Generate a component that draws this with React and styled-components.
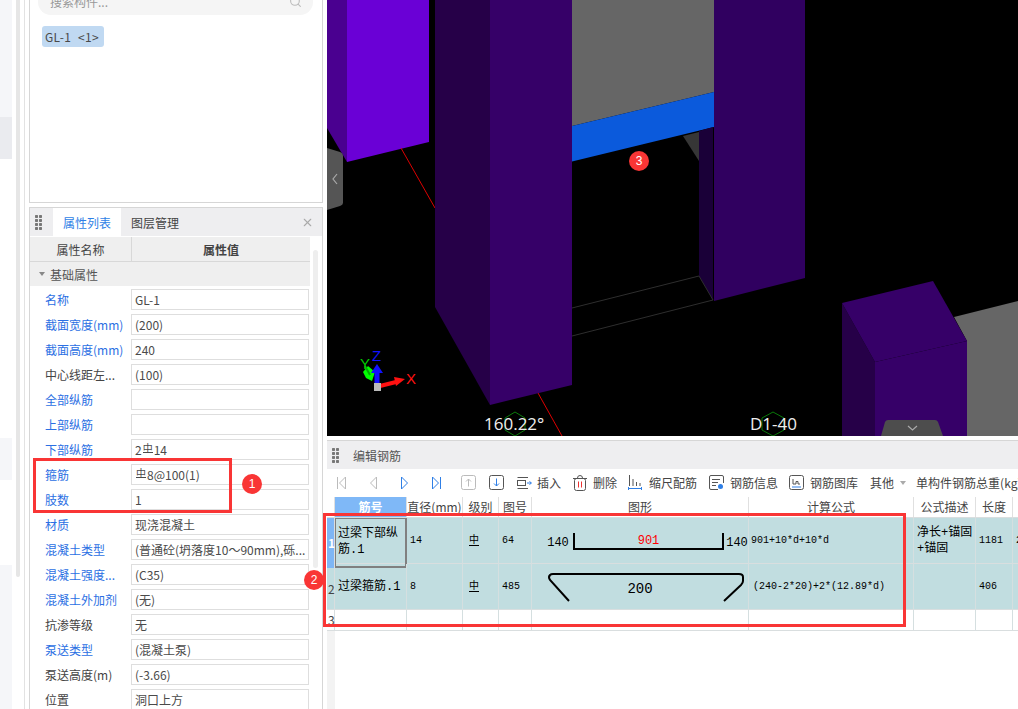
import React from "react";
import styled, { createGlobalStyle } from "styled-components";
import { Search, X } from "lucide-react";

const SANS = '"Noto Sans CJK SC", "Liberation Sans", sans-serif';
const MONO = '"Liberation Mono", "Noto Sans CJK SC", monospace';
const RED = "#f93535";
const COLUMNS = "8px 72px 56px 36px 33px 217px 165px 62px 37px 60px";

const GlobalStyle = createGlobalStyle`
  html, body {
    margin: 0;
    padding: 0;
    background: #fff;
  }
  * {
    box-sizing: border-box;
  }
`;

const Page = styled.div`
  position: relative;
  display: flex;
  width: 1018px;
  height: 709px;
  overflow: hidden;
  background: #fff;
  font-family: ${SANS};
  font-size: 12px;
  color: #444;
`;

/* far left: edge of the neighbouring panel */
const Rail = styled.div`
  display: flex;
  flex: none;
  width: 29px;
`;

const RailStrip = styled.div`
  display: flex;
  flex-direction: column;
  width: 12px;
  margin-right: 4px;
`;

const RailBlock = styled.div`
  height: ${(p) => p.$h}px;
  background: ${(p) => p.$bg || "#fff"};
`;

const RailThumb = styled.div`
  width: 4px;
  height: 577px;
  margin-right: 4px;
  background: #e6e6e6;
  border-radius: 0 0 2px 2px;
`;

const RailLine = styled.div`
  width: 1px;
  background: #e2e2e2;
`;

const Sidebar = styled.div`
  display: flex;
  flex: none;
  flex-direction: column;
  gap: 4px;
  width: 294px;
`;

const ListPanel = styled.section`
  flex: none;
  height: 203px;
  padding: 0 8px;
  border: 1px solid #d6d6d6;
  border-top: 0;
`;

const SearchBox = styled.div`
  display: flex;
  align-items: center;
  justify-content: space-between;
  width: 275px;
  height: 30px;
  margin-top: -15px;
  padding: 3px 11px 0 12px;
  background: #f5f5f5;
  border-radius: 13px;
  color: #999;
  font-size: 12px;
`;

const Chip = styled.div`
  display: inline-block;
  height: 21px;
  margin: 11px 0 0 4px;
  padding: 0 5px 0 3px;
  background: #c0d9f2;
  border-radius: 3px;
  color: #4a4a4a;
  font-size: 12px;
  letter-spacing: 0.3px;
  line-height: 21px;
  word-spacing: 4px;
`;

const PropPanel = styled.section`
  flex: 1;
  min-height: 0;
  border: 1px solid #d6d6d6;
  border-bottom: 0;
`;

const PanelHeader = styled.header`
  display: flex;
  align-items: center;
  height: 28px;
  background: #eeeef0;
`;

const Grip = styled.div`
  flex: none;
  width: 7px;
  height: 15px;
  margin: 0 ${(p) => p.$after}px 0 5px;
  background: radial-gradient(circle at 1.5px 1.5px, #777 1.4px, transparent 1.5px) 0 0 / 4px 4px;
`;

const Tab = styled.div`
  display: flex;
  align-items: center;
  justify-content: center;
  width: 68px;
  height: 28px;
  background: ${(p) => (p.$active ? "#fff" : "transparent")};
  color: ${(p) => (p.$active ? "#2f7fe6" : "#444")};
`;

const HeaderTitle = styled.span`
  color: #555;
`;

const CloseButton = styled.span`
  display: flex;
  margin-left: auto;
  margin-right: 8px;
  color: #aaa;
`;

const PropBody = styled.div`
  display: flex;
  padding-top: 1px;
`;

const PropTable = styled.div`
  flex: none;
  width: 280px;
`;

const PropHead = styled.div`
  display: grid;
  grid-template-columns: 101px 1fr;
  height: 25px;
  background: #efefef;
  border-bottom: 1px solid #d8d8d8;
  line-height: 25px;
  text-align: center;
`;

const PropHeadCell = styled.div`
  border-left: ${(p) => (p.$divider ? "1px solid #d8d8d8" : "0")};
  font-weight: ${(p) => (p.$divider ? 700 : 400)};
`;

const SectionRow = styled.div`
  display: flex;
  align-items: center;
  height: 24px;
  padding-left: 9px;
  background: #efefef;
  color: #555;
`;

const Caret = styled.span`
  width: 0;
  height: 0;
  margin-right: 5px;
  border-left: 3px solid transparent;
  border-right: 3px solid transparent;
  border-top: 4px solid #888;
`;

const PropRow = styled.div`
  display: grid;
  grid-template-columns: 101px 178px;
  align-items: center;
  height: 25px;
  padding-top: 1px;
`;

const PropName = styled.div`
  overflow: hidden;
  padding-left: 15px;
  color: ${(p) => (p.$linked ? "#2b6fe3" : "#444")};
  white-space: nowrap;
`;

const PropValue = styled.div`
  overflow: hidden;
  height: 21px;
  padding-left: 3px;
  border: 1px solid #dedede;
  color: #4a4a4a;
  line-height: 19px;
  white-space: nowrap;
`;

const PropScroll = styled.div`
  flex: none;
  width: 5px;
  height: 318px;
  margin: 13px 0 0 3px;
  background: #eee;
  border-radius: 3px;
`;

const GradeMark = styled.span`
  display: inline-block;
  margin: 0 1px;
  border-bottom: 1px solid currentColor;
  font-size: 10px;
  line-height: 9px;
  vertical-align: ${(p) => p.$lift || 0}px;
`;

const Main = styled.main`
  display: flex;
  flex: none;
  flex-direction: column;
  gap: 4px;
  width: 691px;
  margin-left: 4px;
`;

const Viewport = styled.div`
  position: relative;
  flex: none;
  height: 436px;
  background: #000;
`;

const SceneSvg = styled.svg`
  display: block;
`;

const SceneLabel = styled.span`
  position: absolute;
  top: 413px;
  left: ${(p) => p.$left}px;
  color: #eee;
  font-family: "Open Sans", "Liberation Sans", sans-serif;
  font-size: 17px;
  line-height: 22px;
`;

const RebarPanel = styled.section`
  flex: 1;
  min-height: 0;
  overflow: hidden;
  border-top: 1px solid #d6d6d6;
`;

const RebarHeader = styled(PanelHeader)`
  padding-right: 8px;
`;

const Toolbar = styled.div`
  display: flex;
  align-items: center;
  height: 28px;
  padding-bottom: 1px;
  white-space: nowrap;
`;

const NavButton = styled.span`
  display: flex;
  flex: none;
  align-items: center;
  justify-content: center;
  width: 31px;
`;

const BoxButton = styled(NavButton)`
  width: 28px;
  margin-left: ${(p) => p.$offset || 0}px;
`;

const ToolItem = styled.span`
  display: flex;
  flex: none;
  align-items: center;
  gap: ${(p) => p.$gap || 6}px;
  margin-left: ${(p) => p.$offset}px;
  color: #444;
`;

const ToolCaret = styled(Caret)`
  margin: 0;
  border-top-color: #aaa;
`;

const GridRow = styled.div`
  display: grid;
  grid-template-columns: ${COLUMNS};
  width: 726px;
  height: ${(p) => p.$h}px;
  background: ${(p) => p.$bg || "#fff"};
  border-bottom: 1px solid #d9dedf;
`;

const HeadCell = styled.div`
  overflow: hidden;
  background: ${(p) => (p.$active ? "#7fb8f7" : "#fff")};
  border-right: 1px solid #e0e0e0;
  color: ${(p) => (p.$active ? "#fff" : "#444")};
  font-weight: ${(p) => (p.$active ? 700 : 400)};
  line-height: 20px;
  text-align: center;
  white-space: nowrap;
`;

const RowNumber = styled.div`
  overflow: visible;
  padding-left: 1px;
  background: ${(p) => p.$bg || "transparent"};
  border-right: 1px solid #d9dedf;
  color: ${(p) => (p.$active ? "#fff" : "#444")};
  font-size: 12px;
  font-weight: ${(p) => (p.$active ? 700 : 400)};
  line-height: ${(p) => p.$lh}px;
`;

const Cell = styled.div`
  display: flex;
  align-items: center;
  overflow: hidden;
  padding-bottom: 4px;
  padding-left: ${(p) => p.$pad ?? 3}px;
  border-right: 1px solid #d5dfe0;
  color: #000;
  font-family: ${MONO};
  font-size: ${(p) => p.$size || 10}px;
  line-height: ${(p) => (p.$size ? 16 : 14)}px;
`;

const SelectedCell = styled(Cell)`
  padding-bottom: 2px;
  padding-left: 2px;
  border: 2.5px solid #808080;
  border-top-width: 1px;
  border-left-width: 1px;
`;

const ShapeCell = styled(Cell)`
  position: relative;
  justify-content: ${(p) => (p.$center ? "center" : "flex-start")};
  padding-bottom: 0;
  padding-left: ${(p) => (p.$center ? 0 : 11)}px;
  font-size: 12px;
`;

const ShapeNumber = styled.span`
  flex: none;
  width: ${(p) => p.$w}px;
  text-align: center;
`;

const BentBar = styled.div`
  display: flex;
  justify-content: center;
  flex: none;
  width: 151px;
  height: 17px;
  margin-top: -4px;
  border: 2px solid #000;
  border-top: 0;
  color: #f00;
  line-height: 16px;
`;

const HookSvg = styled.svg`
  position: absolute;
  top: 0;
  left: 0;
`;

const HookLength = styled.span`
  position: relative;
  font-size: 14px;
`;

const FillerRow = styled.div`
  width: 8px;
  height: 100%;
  background: #f3f3f3;
`;

const Callout = styled.div`
  position: absolute;
  top: ${(p) => p.$top}px;
  left: ${(p) => p.$left}px;
  width: ${(p) => p.$w}px;
  height: ${(p) => p.$h}px;
  border: 3px solid ${RED};
`;

const Badge = styled.span`
  position: absolute;
  top: ${(p) => p.$top}px;
  left: ${(p) => p.$left}px;
  width: 20px;
  height: 20px;
  background: ${RED};
  border-radius: 50%;
  color: #fff;
  font-family: "Liberation Sans", sans-serif;
  font-size: 12px;
  line-height: 20px;
  text-align: center;
`;

const Grade = ({ lift }) => <GradeMark $lift={lift}>中</GradeMark>;

const properties = [
  { name: "名称", value: "GL-1", linked: true },
  { name: "截面宽度(mm)", value: "(200)", linked: true },
  { name: "截面高度(mm)", value: "240", linked: true },
  { name: "中心线距左...", value: "(100)" },
  { name: "全部纵筋", value: "", linked: true },
  { name: "上部纵筋", value: "", linked: true },
  { name: "下部纵筋", value: <>2<Grade lift={3} />14</>, linked: true },
  { name: "箍筋", value: <><Grade lift={3} />8@100(1)</>, linked: true },
  { name: "肢数", value: "1", linked: true },
  { name: "材质", value: "现浇混凝土", linked: true },
  { name: "混凝土类型", value: "(普通砼(坍落度10～90mm),砾...", linked: true },
  { name: "混凝土强度...", value: "(C35)", linked: true },
  { name: "混凝土外加剂", value: "(无)", linked: true },
  { name: "抗渗等级", value: "无" },
  { name: "泵送类型", value: "(混凝土泵)", linked: true },
  { name: "泵送高度(m)", value: "(-3.66)" },
  { name: "位置", value: "洞口上方" },
];

const railBlocks = [
  [117, "#f5f6f9"],
  [42, "#eaebef"],
  [279, "#fff"],
  [42, "#f5f6f9"],
  [85, "#fff"],
  [144, "#f5f6f9"],
];

const Scene = () => (
  <SceneSvg width="691" height="436" viewBox="327 0 691 436">
    <polygon points="327,0 347,0 347,162 327,128" fill="#4a0090" />
    <polygon points="347,0 429,0 429,142 347,162" fill="#6a00d6" />
    <line x1="401" y1="148" x2="435" y2="208" stroke="#d00" />
    <line x1="538" y1="393" x2="562" y2="436" stroke="#d00" />

    <polygon points="572,0 714,0 714,92 572,126" fill="#666" />
    <polygon points="572,126 714,92 714,127 572,161.5" fill="#0b5adc" />
    <polygon points="683,136 699,132 699,161" fill="#363636" />
    <polygon points="699,131 713,127 713,300 699,276" fill="#1a0038" />
    <g stroke="#2e2e2e" fill="none">
      <line x1="572" y1="308" x2="699" y2="276" />
      <line x1="572" y1="336" x2="713" y2="300" />
      <line x1="699" y1="276" x2="713" y2="300" />
    </g>

    <polygon points="435,0 490,0 490,405 435,307" fill="#260048" />
    <polygon points="490,0 572,0 572,385 490,405" fill="#360068" />
    <polygon points="714,0 805,0 805,278 714,301" fill="#300060" />

    <polygon points="954,317 1018,301 1018,436 967,436 967,341" fill="#666" />
    <polygon points="842,303 875,362 875,436 842,436" fill="#260048" />
    <polygon points="842,303 933,281 967,341 875,362" fill="#360068" />
    <polygon points="875,362 967,341 967,436 875,436" fill="#360068" />

    <path d="M327 148 L340 152 Q343 153 343 156 V203 Q343 205 340 206 L327 210 Z" fill="#555" />
    <path d="M337 174 L333 179 L337 184" fill="none" stroke="#aaa" strokeWidth="1.2" />
    <path d="M881 436 L885 422 Q886 420 888 420 H935 Q937 420 938 422 L943 436 Z" fill="#4d4d4d" />
    <path d="M908 426 L912.5 430 L917 426" fill="none" stroke="#aaa" strokeWidth="1.2" />

    <polygon points="515,412 525,418 525,430 515,436 505,430 505,418" fill="none" stroke="#0a7a0a" />
    <polygon points="773,412 784,418 784,430 773,436 762,430 762,418" fill="none" stroke="#0a7a0a" />

    <polygon points="368,366 375,372 372,381 366,378 363,372" fill="#0f0" />
    <line x1="370" y1="375" x2="365" y2="366" stroke="#0a0" strokeWidth="2" />
    <line x1="380" y1="386" x2="396" y2="382" stroke="#f11" strokeWidth="4" />
    <polygon points="394,377 405,379 396,386" fill="#f11" />
    <line x1="377" y1="385" x2="377" y2="372" stroke="#11f" strokeWidth="5" />
    <polygon points="377,364 383,373 371,373" fill="#11f" />
    <rect x="374" y="383" width="7" height="8" fill="#bbb" />
    <text x="360" y="369" fill="#0c0" fontFamily="Liberation Sans, sans-serif" fontSize="15">Y</text>
    <text x="372" y="361" fill="#11f" fontFamily="Liberation Sans, sans-serif" fontSize="15">Z</text>
    <text x="406" y="384" fill="#f11" fontFamily="Liberation Sans, sans-serif" fontSize="15">X</text>
  </SceneSvg>
);

const NavIcon = ({ dir, bar, color }) => (
  <svg width="11" height="14" viewBox="0 0 11 14" fill="none" stroke={color}>
    {dir === "left" ? <path d="M8.5 1 L2.5 7 L8.5 13 Z" /> : <path d="M2.5 1 L8.5 7 L2.5 13 Z" />}
    {bar && <path d={dir === "left" ? "M0.5 1 V13" : "M10.5 1 V13"} />}
  </svg>
);

const BoxArrow = ({ down, border, color }) => (
  <svg width="15" height="15" viewBox="0 0 15 15" fill="none">
    <rect x="0.5" y="0.5" width="14" height="14" rx="2" stroke={border} />
    <path d={down ? "M7.5 3.5 V11 M5 8.5 L7.5 11 L10 8.5" : "M7.5 11.5 V4 M5 6.5 L7.5 4 L10 6.5"} stroke={color} />
  </svg>
);

const InsertIcon = () => (
  <svg width="15" height="12" viewBox="0 0 15 12" fill="none" stroke="#555">
    <path d="M0.5 0.5 H11 M0.5 11.5 H11" />
    <rect x="0.5" y="3.5" width="8" height="5" />
    <path d="M10 6 H14" stroke="#2f7fe6" />
    <path d="M12.5 4.5 L14.5 6 L12.5 7.5" stroke="#2f7fe6" />
  </svg>
);

const TrashIcon = () => (
  <svg width="14" height="16" viewBox="0 0 14 16" fill="none" stroke="#555">
    <path d="M0 3.5 H14 M4.5 3 Q4.5 0.5 7 0.5 Q9.5 0.5 9.5 3" />
    <rect x="1.5" y="3.5" width="11" height="12" rx="2" />
    <path d="M5.5 6.5 V12.5 M8.5 6.5 V12.5" stroke="#e33" />
  </svg>
);

const ScaleIcon = () => (
  <svg width="14" height="15" viewBox="0 0 14 15" fill="none" stroke="#555">
    <path d="M1.5 0 V11 M5 4 V11 M8.5 7 V11 M12 8 V11" />
    <path d="M0.5 13.5 H13.5 M0.5 12 V15 M13.5 12 V15" stroke="#2f7fe6" />
  </svg>
);

const InfoIcon = () => (
  <svg width="15" height="15" viewBox="0 0 15 15" fill="none" stroke="#555">
    <path d="M9 14.5 H2 Q0.5 14.5 0.5 13 V2 Q0.5 0.5 2 0.5 H13 Q14.5 0.5 14.5 2 V8" />
    <path d="M3 4.5 H11 M3 7.5 H9 M3 10.5 H7" />
    <circle cx="11.5" cy="11.5" r="2.5" fill="#2f7fe6" stroke="none" />
  </svg>
);

const LibraryIcon = () => (
  <svg width="15" height="15" viewBox="0 0 15 15" fill="none" stroke="#555">
    <rect x="0.5" y="0.5" width="14" height="14" rx="2" />
    <path d="M4 4 V9 H7 V6.5 H9 V9 H11" />
    <path d="M3 12 H12" stroke="#2f7fe6" />
  </svg>
);

const HookShape = () => (
  <HookSvg width="217" height="46" viewBox="0 0 217 46" fill="none" stroke="#000" strokeWidth="2">
    <path d="M37 37 L18 16 Q16 13 18 11 Q19 10 21 10 H207 Q211 10 211 13 V17 Q211 19 209 21 L192 37" />
  </HookSvg>
);

const App = () => (
  <Page>
    <GlobalStyle />

    <Rail>
      <RailStrip>
        {railBlocks.map(([h, bg], i) => (
          <RailBlock key={i} $h={h} $bg={bg} />
        ))}
      </RailStrip>
      <RailThumb />
      <RailLine />
    </Rail>

    <Sidebar>
      <ListPanel>
        <SearchBox>
          <span>搜索构件...</span>
          <Search size={13} color="#bbb" />
        </SearchBox>
        <Chip>GL-1 &lt;1&gt;</Chip>
      </ListPanel>

      <PropPanel>
        <PanelHeader>
          <Grip $after={11} />
          <Tab $active>属性列表</Tab>
          <Tab>图层管理</Tab>
          <CloseButton>
            <X size={13} />
          </CloseButton>
        </PanelHeader>
        <PropBody>
          <PropTable>
            <PropHead>
              <PropHeadCell>属性名称</PropHeadCell>
              <PropHeadCell $divider>属性值</PropHeadCell>
            </PropHead>
            <SectionRow>
              <Caret />
              基础属性
            </SectionRow>
            {properties.map((item) => (
              <PropRow key={item.name}>
                <PropName $linked={item.linked}>{item.name}</PropName>
                <PropValue>{item.value}</PropValue>
              </PropRow>
            ))}
          </PropTable>
          <PropScroll />
        </PropBody>
      </PropPanel>
    </Sidebar>

    <Main>
      <Viewport>
        <Scene />
        <SceneLabel $left={157}>160.22°</SceneLabel>
        <SceneLabel $left={423}>D1-40</SceneLabel>
      </Viewport>

      <RebarPanel>
        <RebarHeader>
          <Grip $after={14} />
          <HeaderTitle>编辑钢筋</HeaderTitle>
        </RebarHeader>

        <Toolbar>
          <NavButton><NavIcon dir="left" bar color="#bbb" /></NavButton>
          <NavButton><NavIcon dir="left" color="#bbb" /></NavButton>
          <NavButton><NavIcon dir="right" color="#2f7fe6" /></NavButton>
          <NavButton><NavIcon dir="right" bar color="#2f7fe6" /></NavButton>
          <BoxButton $offset={3}><BoxArrow border="#bbb" color="#bbb" /></BoxButton>
          <BoxButton><BoxArrow down border="#555" color="#2f7fe6" /></BoxButton>
          <ToolItem $offset={7} $gap={5}><InsertIcon />插入</ToolItem>
          <ToolItem $offset={12}><TrashIcon />删除</ToolItem>
          <ToolItem $offset={11} $gap={7}><ScaleIcon />缩尺配筋</ToolItem>
          <ToolItem $offset={12}><InfoIcon />钢筋信息</ToolItem>
          <ToolItem $offset={11}><LibraryIcon />钢筋图库</ToolItem>
          <ToolItem $offset={12}>其他<ToolCaret /></ToolItem>
          <ToolItem $offset={10}>单构件钢筋总重(kg)</ToolItem>
        </Toolbar>

        <GridRow $h={21}>
          <HeadCell />
          <HeadCell $active>筋号</HeadCell>
          <HeadCell>直径(mm)</HeadCell>
          <HeadCell>级别</HeadCell>
          <HeadCell>图号</HeadCell>
          <HeadCell>图形</HeadCell>
          <HeadCell>计算公式</HeadCell>
          <HeadCell>公式描述</HeadCell>
          <HeadCell>长度</HeadCell>
          <HeadCell />
        </GridRow>

        <GridRow $h={46} $bg="#c1dde0">
          <RowNumber $active $bg="#7eb6f5" $lh={50}>1</RowNumber>
          <SelectedCell $size={12}>过梁下部纵筋.1</SelectedCell>
          <Cell>14</Cell>
          <Cell $pad={5}><Grade /></Cell>
          <Cell>64</Cell>
          <ShapeCell>
            <ShapeNumber $w={30}>140</ShapeNumber>
            <BentBar>901</BentBar>
            <ShapeNumber $w={26}>140</ShapeNumber>
          </ShapeCell>
          <Cell $pad={2}>901+10*d+10*d</Cell>
          <Cell $size={12}>净长+锚固<br />+锚固</Cell>
          <Cell>1181</Cell>
          <Cell>2</Cell>
        </GridRow>

        <GridRow $h={46} $bg="#c1dde0">
          <RowNumber $lh={50}>2</RowNumber>
          <Cell $size={12}>过梁箍筋.1</Cell>
          <Cell>8</Cell>
          <Cell $pad={5}><Grade /></Cell>
          <Cell>485</Cell>
          <ShapeCell $center>
            <HookShape />
            <HookLength>200</HookLength>
          </ShapeCell>
          <Cell $pad={4}>(240-2*20)+2*(12.89*d)</Cell>
          <Cell />
          <Cell>406</Cell>
          <Cell />
        </GridRow>

        <GridRow $h={21}>
          <RowNumber $lh={20}>3</RowNumber>
          <Cell />
          <Cell />
          <Cell />
          <Cell />
          <Cell />
          <Cell />
          <Cell />
          <Cell />
          <Cell />
        </GridRow>

        <FillerRow />
      </RebarPanel>
    </Main>

    <Callout $left={33} $top={458} $w={199} $h={55} />
    <Callout $left={323} $top={513} $w={583} $h={114} />
    <Badge $left={242} $top={474}>1</Badge>
    <Badge $left={304} $top={570}>2</Badge>
    <Badge $left={629} $top={151}>3</Badge>
  </Page>
);

export default App;
